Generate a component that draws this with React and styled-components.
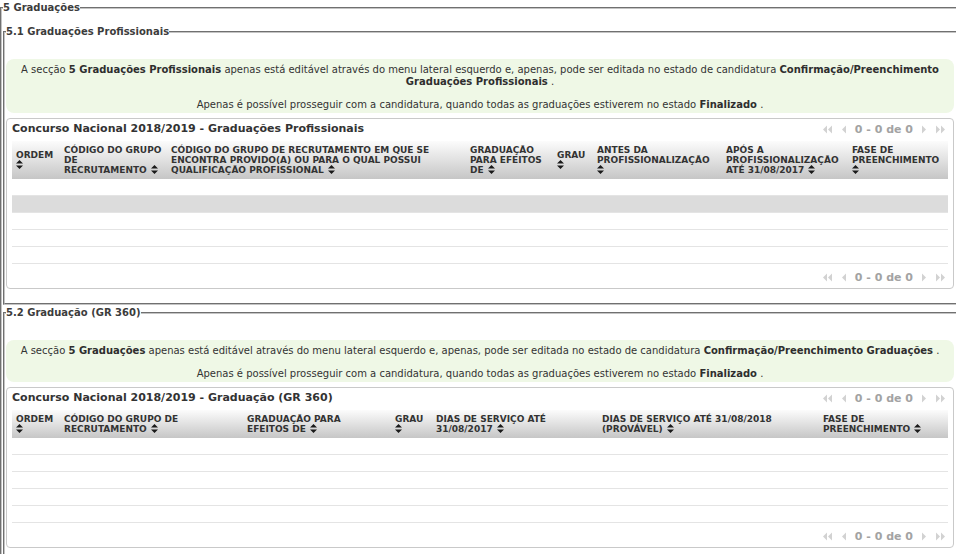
import React from 'react';
import styled, { createGlobalStyle } from 'styled-components';

const GlobalStyle = createGlobalStyle`
  html, body {
    margin: 0;
    padding: 0;
    overflow: hidden;
    background: #fff;
  }
  body {
    font-family: "DejaVu Sans", Verdana, sans-serif;
    font-size: 10px;
    color: #333;
  }
`;

const tableOne = {
  title: 'Concurso Nacional 2018/2019 - Graduações Profissionais',
  widths: [48, 107, 299, 87, 40, 129, 126, 100],
  heads: [
    ['ORDEM', ''],
    ['CÓDIGO DO GRUPO', 'DE', 'RECRUTAMENTO'],
    [
      'CÓDIGO DO GRUPO DE RECRUTAMENTO EM QUE SE',
      'ENCONTRA PROVIDO(A) OU PARA O QUAL POSSUI',
      'QUALIFICAÇÃO PROFISSIONAL',
    ],
    ['GRADUAÇÃO', 'PARA EFEITOS', 'DE'],
    ['GRAU', ''],
    ['ANTES DA', 'PROFISSIONALIZAÇÃO', ''],
    ['APÓS A', 'PROFISSIONALIZAÇÃO', 'ATÉ 31/08/2017'],
    ['FASE DE', 'PREENCHIMENTO', ''],
  ],
  shaded: 1,
};

const tableTwo = {
  title: 'Concurso Nacional 2018/2019 - Graduação (GR 360)',
  widths: [48, 183, 148, 41, 166, 221, 129],
  heads: [
    ['ORDEM', ''],
    ['CÓDIGO DO GRUPO DE', 'RECRUTAMENTO'],
    ['GRADUAÇÃO PARA', 'EFEITOS DE'],
    ['GRAU', ''],
    ['DIAS DE SERVIÇO ATÉ', '31/08/2017'],
    ['DIAS DE SERVIÇO ATÉ 31/08/2018', '(PROVÁVEL)'],
    ['FASE DE', 'PREENCHIMENTO'],
  ],
  shaded: -1,
};

const SortIcon = ({ $gap }) => (
  <SortSvg viewBox="0 0 7 9" $gap={$gap}>
    <path d="M3.5 0 L7 3.5 H0 Z M0 5.5 H7 L3.5 9 Z" />
  </SortSvg>
);

const PagerIcon = ({ dir, double }) => (
  <PagerSvg viewBox={double ? '0 0 11 9' : '0 0 6 9'} $w={double ? 11 : 6}>
    {dir === 'left' ? (
      double ? (
        <path d="M5 0.5 L1 4.5 L5 8.5 Z M10 0.5 L6 4.5 L10 8.5 Z" />
      ) : (
        <path d="M5 0.5 L1 4.5 L5 8.5 Z" />
      )
    ) : double ? (
      <path d="M1 0.5 L5 4.5 L1 8.5 Z M6 0.5 L10 4.5 L6 8.5 Z" />
    ) : (
      <path d="M1 0.5 L5 4.5 L1 8.5 Z" />
    )}
  </PagerSvg>
);

const Pager = () => (
  <PagerRow>
    <PagerIcon dir="left" double />
    <PagerIcon dir="left" />
    <PagerText>0 - 0 de 0</PagerText>
    <PagerIcon dir="right" />
    <PagerIcon dir="right" double />
  </PagerRow>
);

const DataTable = ({ data }) => (
  <Panel>
    <TitleBar>
      <Title>{data.title}</Title>
      <Pager />
    </TitleBar>
    <Grid>
      <colgroup>
        {data.widths.map((w, i) => (
          <col key={i} style={{ width: w }} />
        ))}
      </colgroup>
      <thead>
        <HeadRow>
          {data.heads.map((lines, i) => (
            <Th key={i}>
              {lines.map((line, j) => (
                <React.Fragment key={j}>
                  {j > 0 && <br />}
                  {line}
                  {j === lines.length - 1 && <SortIcon $gap={line !== ''} />}
                </React.Fragment>
              ))}
            </Th>
          ))}
        </HeadRow>
      </thead>
      <tbody>
        {[0, 1, 2, 3, 4].map((r) => (
          <Row key={r} $shade={r === data.shaded}>
            {data.widths.map((_, c) => (
              <Td key={c} />
            ))}
          </Row>
        ))}
      </tbody>
    </Grid>
    <Footer>
      <Pager />
    </Footer>
  </Panel>
);

const App = () => (
  <Page>
    <GlobalStyle />
    <Outer>
      <Legend>5 Graduações</Legend>
      <Section>
        <Legend>5.1 Graduações Profissionais</Legend>
        <Notice>
          <p>
            A secção <b>5 Graduações Profissionais</b> apenas está editável através do menu
            lateral esquerdo e, apenas, pode ser editada no estado de candidatura{' '}
            <b>Confirmação/Preenchimento</b> <b>Graduações Profissionais</b> .
          </p>
          <p>
            Apenas é possível prosseguir com a candidatura, quando todas as graduações
            estiverem no estado <b>Finalizado</b> .
          </p>
        </Notice>
        <DataTable data={tableOne} />
      </Section>
      <Section>
        <Legend>5.2 Graduação (GR 360)</Legend>
        <Notice>
          <p>
            A secção <b>5 Graduações</b> apenas está editável através do menu lateral esquerdo
            e, apenas, pode ser editada no estado de candidatura{' '}
            <b>Confirmação/Preenchimento Graduações</b> .
          </p>
          <p>
            Apenas é possível prosseguir com a candidatura, quando todas as graduações
            estiverem no estado <b>Finalizado</b> .
          </p>
        </Notice>
        <DataTable data={tableTwo} />
      </Section>
    </Outer>
  </Page>
);

export default App;

const Page = styled.div`
  width: 960px;
  padding-top: 1px;
`;

const Outer = styled.fieldset`
  margin: 0;
  padding: 11px 0 0 1px;
  border: 2px groove #c4c4c4;
  min-width: 0;
`;

const Section = styled.fieldset`
  margin: 0;
  padding: 21px 2px 14px 1px;
  border: 2px groove #c4c4c4;
  min-width: 0;
  & + & {
    margin-top: 1px;
  }
`;

const Legend = styled.legend`
  padding: 0;
  font-size: 10px;
  line-height: 13px;
  font-weight: bold;
  color: #3c3c3c;
`;

const Notice = styled.div`
  background: #eff8e6;
  border-radius: 8px;
  padding: 5px 10px 2px;
  text-align: center;
  line-height: 12px;
  color: #333;
  p {
    margin: 0;
  }
  p + p {
    margin-top: 11px;
  }
  b {
    color: #2e2e2e;
  }
`;

const Panel = styled.div`
  margin-top: 5px;
  border: 1px solid #c9c9c9;
  border-radius: 4px;
  padding: 0 5px;
`;

const TitleBar = styled.div`
  display: flex;
  align-items: flex-start;
  justify-content: space-between;
  box-sizing: border-box;
  height: 22px;
  padding-top: 3px;
`;

const Title = styled.h3`
  margin: 0;
  font-size: 11px;
  line-height: 14px;
  font-weight: bold;
  color: #333;
`;

const PagerRow = styled.div`
  display: flex;
  align-items: center;
  gap: 8px;
  height: 14px;
  padding-right: 2px;
`;

const PagerSvg = styled.svg`
  width: ${(p) => p.$w}px;
  height: 9px;
  fill: #d2d2d2;
`;

const PagerText = styled.span`
  font-size: 11px;
  font-weight: bold;
  color: #a3a3a3;
`;

const Grid = styled.table`
  width: 100%;
  border-collapse: collapse;
  table-layout: fixed;
`;

const HeadRow = styled.tr`
  background: linear-gradient(#fcfcfc, #c6c6c6);
`;

const Th = styled.th`
  padding: 4px 4px;
  text-align: left;
  vertical-align: middle;
  font-size: 9px;
  line-height: 10px;
  font-weight: bold;
  color: #333;
  white-space: nowrap;
  overflow: hidden;
`;

const SortSvg = styled.svg`
  display: inline-block;
  width: 7px;
  height: 9px;
  margin-left: ${(p) => (p.$gap ? '4px' : '0')};
  vertical-align: -1px;
  fill: #1a1a1a;
`;

const Row = styled.tr`
  background: ${(p) => (p.$shade ? '#dcdcdc' : 'transparent')};
`;

const Td = styled.td`
  height: 16px;
  padding: 0;
  border-bottom: 1px solid #e4e4e4;
`;

const Footer = styled.div`
  display: flex;
  justify-content: flex-end;
  align-items: center;
  height: 21px;
  padding-top: 3px;
`;
